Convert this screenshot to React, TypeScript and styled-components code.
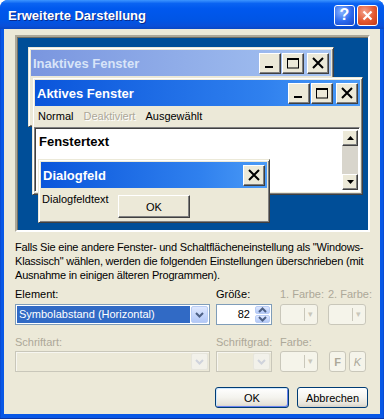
import styled, { createGlobalStyle } from 'styled-components';

const GlobalStyle = createGlobalStyle`
  html, body { margin: 0; padding: 0; background: #ffffff; }
  body { font-family: 'Liberation Sans', Arial, sans-serif; font-size: 11px; color: #000; }
  * { box-sizing: border-box; }
`;

type Kind = 'inactive' | 'active' | 'dialog';

const Chevron = ({ up, color = '#4d6185' }: { up?: boolean; color?: string }) => (
  <svg width="9" height="6" viewBox="0 0 9 6">
    <path d={up ? 'M1 5 L4.5 1.5 L8 5' : 'M1 1 L4.5 4.5 L8 1'} fill="none" stroke={color} strokeWidth="2" />
  </svg>
);

const Glyph = ({ type }: { type: 'min' | 'max' | 'close' }) => {
  if (type === 'min')
    return (
      <svg width="14" height="12" viewBox="0 0 14 12">
        <rect x="2" y="9" width="8" height="2" fill="#000" />
      </svg>
    );
  if (type === 'max')
    return (
      <svg width="14" height="12" viewBox="0 0 14 12">
        <rect x="1.5" y="1.5" width="11" height="9.5" fill="none" stroke="#000" strokeWidth="1" />
        <rect x="1" y="1" width="12" height="2" fill="#000" />
      </svg>
    );
  return (
    <svg width="14" height="12" viewBox="0 0 14 12">
      <path d="M2 1 L12 11 M12 1 L2 11" stroke="#000" strokeWidth="2" />
    </svg>
  );
};

export default function App() {
  return (
    <>
      <GlobalStyle />
      <Window>
        <TitleBar>
          <TitleText>Erweiterte Darstellung</TitleText>
          <CaptionButtons>
            <CaptionButton $variant="help">?</CaptionButton>
            <CaptionButton $variant="close">
              <svg width="11" height="11" viewBox="0 0 11 11">
                <path d="M1.5 1.5 L9.5 9.5 M9.5 1.5 L1.5 9.5" stroke="#fff" strokeWidth="2.2" />
              </svg>
            </CaptionButton>
          </CaptionButtons>
        </TitleBar>

        <Client>
          <Preview>
            <PreviewWindow $left={11} $top={10} $width={306} $height={80}>
              <PreviewTitle $kind="inactive">
                <span>Inaktives Fenster</span>
                <TitleButtons>
                  <MiniButton><Glyph type="min" /></MiniButton>
                  <MiniButton><Glyph type="max" /></MiniButton>
                  <MiniButton $close><Glyph type="close" /></MiniButton>
                </TitleButtons>
              </PreviewTitle>
            </PreviewWindow>

            <PreviewWindow $left={15} $top={40} $width={331} $height={118}>
              <PreviewTitle $kind="active">
                <span>Aktives Fenster</span>
                <TitleButtons>
                  <MiniButton><Glyph type="min" /></MiniButton>
                  <MiniButton><Glyph type="max" /></MiniButton>
                  <MiniButton $close><Glyph type="close" /></MiniButton>
                </TitleButtons>
              </PreviewTitle>
              <MenuBar>
                <MenuItem>Normal</MenuItem>
                <MenuItem $disabled>Deaktiviert</MenuItem>
                <MenuItem>Ausgewählt</MenuItem>
              </MenuBar>
              <TextArea>
                <WindowText>Fenstertext</WindowText>
                <ScrollBar>
                  <ScrollArrow>
                    <svg width="7" height="4" viewBox="0 0 7 4"><path d="M3.5 0 L7 4 L0 4 Z" fill="#000" /></svg>
                  </ScrollArrow>
                  <ScrollTrack />
                  <ScrollArrow>
                    <svg width="7" height="4" viewBox="0 0 7 4"><path d="M0 0 L7 0 L3.5 4 Z" fill="#000" /></svg>
                  </ScrollArrow>
                </ScrollBar>
              </TextArea>
            </PreviewWindow>

            <PreviewWindow $left={21} $top={122} $width={232} $height={64}>
              <PreviewTitle $kind="dialog">
                <span>Dialogfeld</span>
                <TitleButtons>
                  <MiniButton $close><Glyph type="close" /></MiniButton>
                </TitleButtons>
              </PreviewTitle>
              <DialogBody>
                <span>Dialogfeldtext</span>
                <MiniPush>OK</MiniPush>
              </DialogBody>
            </PreviewWindow>
          </Preview>

          <Info>
            Falls Sie eine andere Fenster- und Schaltflächeneinstellung als "Windows-
            <br />
            Klassisch" wählen, werden die folgenden Einstellungen überschrieben (mit
            <br />
            Ausnahme in einigen älteren Programmen).
          </Info>

          <Controls>
            <Label>Element:</Label>
            <Label>Größe:</Label>
            <Label $disabled>1. Farbe:</Label>
            <Label $disabled>2. Farbe:</Label>

            <Combo $width={195}>
              <ComboValue $selected>Symbolabstand (Horizontal)</ComboValue>
              <DropButton><Chevron /></DropButton>
            </Combo>
            <Spin>
              <SpinValue>82</SpinValue>
              <SpinButtons>
                <SpinButton><Chevron up /></SpinButton>
                <SpinButton><Chevron /></SpinButton>
              </SpinButtons>
            </Spin>
            <ColorButton>
              <ColorArrow>▾</ColorArrow>
            </ColorButton>
            <ColorButton>
              <ColorArrow>▾</ColorArrow>
            </ColorButton>

            <Label $disabled $row2>Schriftart:</Label>
            <Label $disabled $row2>Schriftgrad:</Label>
            <Label $disabled $row2>Farbe:</Label>
            <span />

            <Combo $width={195} $disabled>
              <ComboValue />
              <DropButton $disabled><Chevron color="#cfd3dc" /></DropButton>
            </Combo>
            <Combo $width={56} $disabled>
              <ComboValue />
              <DropButton $disabled><Chevron color="#cfd3dc" /></DropButton>
            </Combo>
            <ColorButton>
              <ColorArrow>▾</ColorArrow>
            </ColorButton>
            <StyleButtons>
              <StyleButton>F</StyleButton>
              <StyleButton $italic>K</StyleButton>
            </StyleButtons>
          </Controls>

          <ButtonRow>
            <PushButton $default $width={74}>OK</PushButton>
            <PushButton $width={71}>Abbrechen</PushButton>
          </ButtonRow>
        </Client>
      </Window>
    </>
  );
}

const Window = styled.div`
  width: 384px;
  height: 419px;
  display: flex;
  flex-direction: column;
  background: linear-gradient(90deg, #0a3fc2 0, #0858e6 1px, #0858e6 calc(100% - 1px), #0a3fc2 100%);
  border-radius: 8px 8px 0 0;
  overflow: hidden;
  border-bottom: 1px solid #0a36a8;
`;

const TitleBar = styled.div`
  height: 29px;
  flex-shrink: 0;
  display: flex;
  align-items: center;
  padding: 1px 6px 0 8px;
  background: linear-gradient(180deg, #3d95ff 0%, #0a63f2 12%, #0058ee 30%, #0055e5 70%, #0a4fd8 90%, #0847c4 100%);
`;

const TitleText = styled.span`
  flex: 1;
  color: #fff;
  font: bold 13px 'Liberation Sans', Arial, sans-serif;
  text-shadow: 1px 1px 0 #0b2a8c;
`;

const CaptionButtons = styled.div`
  display: flex;
  gap: 2px;
`;

const CaptionButton = styled.div<{ $variant: 'help' | 'close' }>`
  width: 21px;
  height: 21px;
  border: 1px solid #fff;
  border-radius: 3px;
  display: flex;
  align-items: center;
  justify-content: center;
  color: #fff;
  font: bold 16px 'Liberation Sans', Arial, sans-serif;
  background: ${(p) =>
    p.$variant === 'close'
      ? 'radial-gradient(circle at 35% 30%, #f3a18b 0%, #e2572f 55%, #c23a17 100%)'
      : 'radial-gradient(circle at 35% 30%, #8ab4ff 0%, #2b69ee 55%, #1a47c6 100%)'};
`;

const Client = styled.div`
  flex: 1;
  margin: 0 4px 4px;
  background: #ece9d8;
  padding: 6px 10px 0 11px;
  display: flex;
  flex-direction: column;
`;

const Preview = styled.div`
  position: relative;
  height: 197px;
  border: 2px solid;
  border-color: #aca899 #ffffff #ffffff #aca899;
  background: #004e98;
  box-shadow: inset 1px 1px 0 #716f64;
  overflow: hidden;
`;

const PreviewWindow = styled.div<{ $left: number; $top: number; $width: number; $height: number }>`
  position: absolute;
  left: ${(p) => p.$left}px;
  top: ${(p) => p.$top}px;
  width: ${(p) => p.$width}px;
  height: ${(p) => p.$height}px;
  background: #ece9d8;
  border: 1px solid;
  border-color: #ece9d8 #404040 #404040 #ece9d8;
  box-shadow: inset 1px 1px 0 #ffffff, inset -1px -1px 0 #808080;
  padding: 2px;
  display: flex;
  flex-direction: column;
`;

const titleBackground: Record<Kind, string> = {
  inactive: 'linear-gradient(90deg, #7a96df 0%, #a6c4f2 100%)',
  active: 'linear-gradient(90deg, #0a55db 0%, #2f80ee 70%, #4b9bf7 100%)',
  dialog: 'linear-gradient(90deg, #0a55db 0%, #2f80ee 70%, #4b9bf7 100%)',
};

const PreviewTitle = styled.div<{ $kind: Kind }>`
  height: 26px;
  flex-shrink: 0;
  display: flex;
  align-items: center;
  justify-content: space-between;
  padding: 0 2px 0 2px;
  background: ${(p) => titleBackground[p.$kind]};
  color: ${(p) => (p.$kind === 'inactive' ? '#d8e4f8' : '#ffffff')};
  font: bold 13px 'Liberation Sans', Arial, sans-serif;
`;

const TitleButtons = styled.div`
  display: flex;
  gap: 1px;
`;

const MiniButton = styled.div<{ $close?: boolean }>`
  width: 22px;
  height: 21px;
  margin-left: ${(p) => (p.$close ? '2px' : '0')};
  display: flex;
  align-items: center;
  justify-content: center;
  background: #ece9d8;
  border: 1px solid;
  border-color: #ffffff #404040 #404040 #ffffff;
  box-shadow: inset -1px -1px 0 #808080;
`;

const MenuBar = styled.div`
  height: 20px;
  display: flex;
  align-items: center;
  gap: 10px;
  padding-left: 3px;
`;

const MenuItem = styled.span<{ $disabled?: boolean }>`
  color: ${(p) => (p.$disabled ? '#aca899' : '#000')};
  text-shadow: ${(p) => (p.$disabled ? '1px 1px 0 #ffffff' : 'none')};
`;

const TextArea = styled.div`
  flex: 1;
  margin: 1px 0 0 -1px;
  background: #ffffff;
  border: 1px solid;
  border-color: #808080 #ffffff #ffffff #808080;
  box-shadow: inset 1px 1px 0 #404040;
  display: flex;
  padding: 2px 1px 1px 2px;
`;

const WindowText = styled.div`
  flex: 1;
  padding: 4px 0 0 2px;
  font: bold 13px 'Liberation Sans', Arial, sans-serif;
`;

const ScrollBar = styled.div`
  width: 16px;
  display: flex;
  flex-direction: column;
`;

const ScrollArrow = styled.div`
  height: 16px;
  display: flex;
  align-items: center;
  justify-content: center;
  background: #ece9d8;
  border: 1px solid;
  border-color: #ffffff #404040 #404040 #ffffff;
  box-shadow: inset -1px -1px 0 #808080;
`;

const ScrollTrack = styled.div`
  flex: 1;
  background: #d8d5cc;
`;

const DialogBody = styled.div`
  flex: 1;
  display: grid;
  grid-template-columns: 76px 72px;
  align-items: start;
  padding: 5px 0 0 1px;
`;

const MiniPush = styled.div`
  height: 23px;
  margin-top: 2px;
  display: flex;
  align-items: center;
  justify-content: center;
  background: #ece9d8;
  border: 1px solid;
  border-color: #ffffff #404040 #404040 #ffffff;
  box-shadow: inset -1px -1px 0 #808080;
`;

const Info = styled.p`
  margin: 8px 0 0;
  line-height: 14px;
  letter-spacing: -0.2px;
`;

const Controls = styled.div`
  margin-top: 5px;
  display: grid;
  grid-template-columns: 201px 64px 48px 40px;
  align-items: start;
`;

const Label = styled.div<{ $disabled?: boolean; $row2?: boolean }>`
  height: 14px;
  line-height: 14px;
  margin-top: ${(p) => (p.$row2 ? '10px' : '0')};
  margin-bottom: ${(p) => (p.$row2 ? '2px' : '3px')};
  color: ${(p) => (p.$disabled ? '#aca899' : '#000')};
  white-space: nowrap;
`;

const Combo = styled.div<{ $width: number; $disabled?: boolean }>`
  width: ${(p) => p.$width}px;
  height: 21px;
  display: flex;
  align-items: center;
  padding: 1px;
  border: 1px solid ${(p) => (p.$disabled ? '#c9c7ba' : '#7f9db9')};
  background: ${(p) => (p.$disabled ? '#ece9d8' : '#ffffff')};
  box-shadow: ${(p) => (p.$disabled ? 'inset 1px 1px 0 #f7f6f0' : 'none')};
`;

const ComboValue = styled.div<{ $selected?: boolean }>`
  flex: 1;
  height: 17px;
  line-height: 17px;
  margin-right: 1px;
  padding-left: 2px;
  background: ${(p) => (p.$selected ? '#316ac5' : 'transparent')};
  color: ${(p) => (p.$selected ? '#ffffff' : '#000')};
  white-space: nowrap;
  overflow: hidden;
`;

const DropButton = styled.div<{ $disabled?: boolean }>`
  width: 17px;
  height: 17px;
  display: flex;
  align-items: center;
  justify-content: center;
  border: 1px solid ${(p) => (p.$disabled ? '#e6e5dc' : '#b9cdf5')};
  border-radius: 2px;
  background: ${(p) => (p.$disabled ? '#f2f1ea' : 'linear-gradient(180deg, #dfe8fe 0%, #c3d5fb 60%, #b3c8f6 100%)')};
`;

const Spin = styled.div`
  width: 56px;
  height: 21px;
  display: flex;
  align-items: stretch;
  padding: 1px;
  border: 1px solid #7f9db9;
  background: #ffffff;
`;

const SpinValue = styled.div`
  flex: 1;
  text-align: right;
  line-height: 17px;
  padding-right: 5px;
`;

const SpinButtons = styled.div`
  width: 15px;
  display: flex;
  flex-direction: column;
  gap: 1px;
`;

const SpinButton = styled.div`
  flex: 1;
  display: flex;
  align-items: center;
  justify-content: center;
  border: 1px solid #b9cdf5;
  border-radius: 2px;
  background: linear-gradient(180deg, #dfe8fe 0%, #c3d5fb 60%, #b3c8f6 100%);
`;

const ColorButton = styled.div`
  width: 38px;
  height: 21px;
  border: 1px solid #c9c7ba;
  border-radius: 3px;
  background: #f5f4ea;
  display: flex;
  justify-content: flex-end;
  align-items: center;
  padding-right: 4px;
`;

const ColorArrow = styled.span`
  color: #c9c7ba;
  font-size: 9px;
  border-left: 1px solid #c9c7ba;
  padding-left: 3px;
  line-height: 13px;
`;

const StyleButtons = styled.div`
  display: flex;
  gap: 3px;
  margin-left: 1px;
`;

const StyleButton = styled.div<{ $italic?: boolean }>`
  width: 17px;
  height: 21px;
  border: 1px solid #c9c7ba;
  border-radius: 3px;
  background: #f5f4ea;
  display: flex;
  align-items: center;
  justify-content: center;
  color: #aca899;
  font: ${(p) => (p.$italic ? 'italic 11px' : 'bold 11px')} 'Liberation Sans', Arial, sans-serif;
`;

const ButtonRow = styled.div`
  margin-top: 15px;
  display: flex;
  justify-content: flex-end;
  gap: 8px;
  padding-right: 2px;
`;

const PushButton = styled.div<{ $default?: boolean; $width: number }>`
  width: ${(p) => p.$width}px;
  height: 21px;
  display: flex;
  align-items: center;
  justify-content: center;
  border: 1px solid #003c74;
  border-radius: 3px;
  background: linear-gradient(180deg, #ffffff 0%, #f4f3ee 50%, #e6e3da 85%, #d6d0c5 100%);
  box-shadow: ${(p) => (p.$default ? 'inset 1px 1px 0 #cee7ff, inset -1px -1px 0 #6982ee' : 'none')};
`;
